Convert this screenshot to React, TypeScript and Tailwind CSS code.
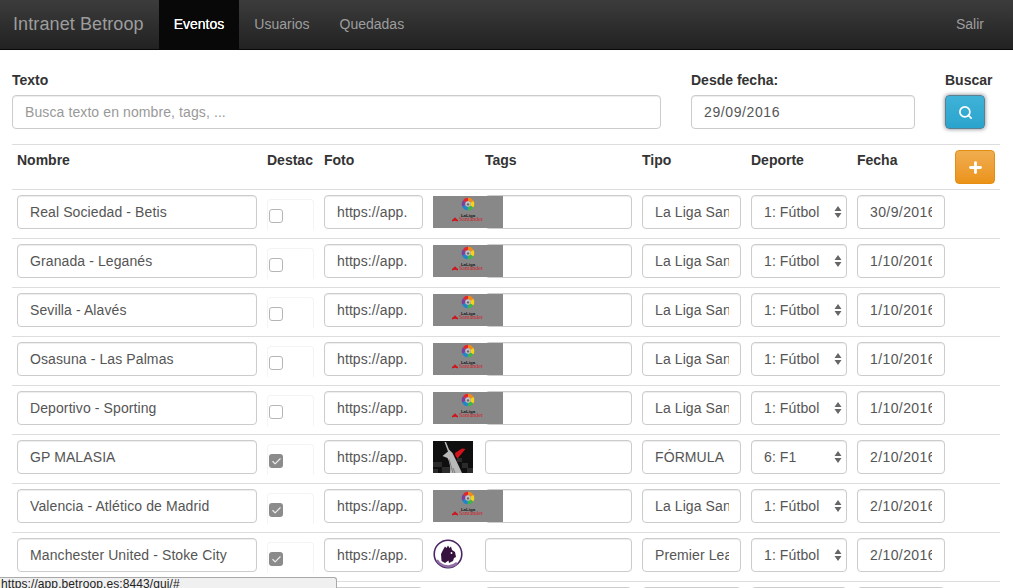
import { Check, Plus, Search } from "lucide-react";

type Logo = "liga" | "f1" | "premier";

type Evento = {
  nombre: string;
  destacado: boolean;
  logo: Logo;
  tipo: string;
  deporte: string;
  fecha: string;
};

const eventos: Evento[] = [
  { nombre: "Real Sociedad - Betis", destacado: false, logo: "liga", tipo: "La Liga Santander", deporte: "1: Fútbol", fecha: "30/9/2016" },
  { nombre: "Granada - Leganés", destacado: false, logo: "liga", tipo: "La Liga Santander", deporte: "1: Fútbol", fecha: "1/10/2016" },
  { nombre: "Sevilla - Alavés", destacado: false, logo: "liga", tipo: "La Liga Santander", deporte: "1: Fútbol", fecha: "1/10/2016" },
  { nombre: "Osasuna - Las Palmas", destacado: false, logo: "liga", tipo: "La Liga Santander", deporte: "1: Fútbol", fecha: "1/10/2016" },
  { nombre: "Deportivo - Sporting", destacado: false, logo: "liga", tipo: "La Liga Santander", deporte: "1: Fútbol", fecha: "1/10/2016" },
  { nombre: "GP MALASIA", destacado: true, logo: "f1", tipo: "FÓRMULA", deporte: "6: F1", fecha: "2/10/2016" },
  { nombre: "Valencia - Atlético de Madrid", destacado: true, logo: "liga", tipo: "La Liga Santander", deporte: "1: Fútbol", fecha: "2/10/2016" },
  { nombre: "Manchester United - Stoke City", destacado: true, logo: "premier", tipo: "Premier League", deporte: "1: Fútbol", fecha: "2/10/2016" },
  { nombre: "", destacado: true, logo: "premier", tipo: "", deporte: "", fecha: "" },
];

const inputClass =
  "h-[34px] rounded-[4px] border border-[#ccc] bg-white px-3 text-sm text-[#555] shadow-[inset_0_1px_1px_rgba(0,0,0,0.075)] outline-none placeholder:text-[#999]";

const wheelColors = ["#f08a1c", "#f6d313", "#3fb44a", "#1f86c9", "#7b3fa0", "#e3262e"];

function LigaLogo() {
  return (
    <svg width="70" height="32" viewBox="0 0 70 32" className="block shrink-0">
      <rect width="70" height="32" fill="#888888" />
      {wheelColors.map((color, i) => (
        <circle
          key={color}
          cx="35"
          cy="8"
          r="4.5"
          fill="none"
          stroke={color}
          strokeWidth="3.6"
          strokeDasharray="4.75 23.52"
          strokeDashoffset={-i * 4.71}
          transform="rotate(-90 35 8)"
        />
      ))}
      <circle cx="35" cy="8" r="2.7" fill="#c4c4c4" />
      <circle cx="35" cy="8.4" r="1.2" fill="#666666" />
      <text x="35" y="20.5" textAnchor="middle" fontSize="4.4" fontWeight="700" fill="#161616" fontFamily="Liberation Sans">
        LaLiga
      </text>
      <path d="M19 25.5 q3-1.6 6 0 v-1.5 l-1.6-1.2 -1.4-1.6 -1.4 1.6 -1.6 1.2z" fill="#d0141c" />
      <text x="26" y="25.3" fontSize="5.6" textLength="24" lengthAdjust="spacingAndGlyphs" fill="#cf1f28" fontFamily="Liberation Serif">
        Santander
      </text>
    </svg>
  );
}

function F1Logo() {
  return (
    <svg width="40" height="32" viewBox="0 0 40 32" className="block shrink-0 blur-[0.4px]">
      <rect width="40" height="32" fill="#0f0f0f" />
      <path d="M0 21h9v5H0z M9 26h8v6H9z M0 28h5v4H0z M29 22h6v5h-6z M34 27h6v5h-6z M24 17h5v4h-5z" fill="#2b2b2b" />
      <path
        d="M11.5 1 L13 1 L16 8.5 L19.5 12 Q23 19 29 32 L17 32 Q18 24 14.5 17 L9.5 15 L15 10.5z"
        fill="#b9b9b9"
      />
      <path d="M20 27 L22 32 M16 18 L20 32" stroke="#6e6e6e" strokeWidth="0.8" fill="none" />
      <path d="M22 12 L29 7.5 L32.5 8 L24.5 17.5 L22.5 15z" fill="#d3121b" />
    </svg>
  );
}

function PremierLogo() {
  return (
    <svg width="32" height="32" viewBox="0 0 32 32" className="block shrink-0 blur-[0.3px]">
      <circle cx="15" cy="15" r="13.8" fill="white" stroke="#4a2463" strokeWidth="1.6" />
      <path d="M4 21 A 13 13 0 0 0 24 24" fill="none" stroke="#8f6fa3" strokeWidth="2.4" />
      <path
        d="M12 7.5 L13.5 9 L15 6.5 L16.5 9 L18 7.5 L19 11 L22 13 L23 18 L21 19 L20 22 L16 24 L15.5 21.5 L12 24 L8.5 22 L8 15 L10 11z"
        fill="#37123f"
      />
      <circle cx="18.5" cy="14" r="0.9" fill="#ffffff" />
    </svg>
  );
}

function LogoImage({ logo }: { logo: Logo }) {
  if (logo === "liga") return <LigaLogo />;
  if (logo === "f1") return <F1Logo />;
  return <PremierLogo />;
}

function FakeCheckbox({ checked }: { checked: boolean }) {
  return (
    <div className="h-[31px] w-[47px] shrink-0 rounded-t-[4px] border-x border-t border-[#f4f4f4] pl-[1px] pt-[9px]">
      {checked ? (
        <div className="flex h-[14px] w-[14px] items-center justify-center rounded-[3px] bg-[#8b8b8b]">
          <Check size={11} strokeWidth={2.5} className="text-[#eee]" />
        </div>
      ) : (
        <div className="h-[14px] w-[14px] rounded-[3px] border border-[#b5b5b5] bg-white" />
      )}
    </div>
  );
}

function Fila({ evento }: { evento: Evento }) {
  return (
    <div className="flex h-[49px] gap-[10px] border-t border-[#ddd] px-[5px] pt-[5px]">
      <input readOnly value={evento.nombre} className={`${inputClass} w-[240px] shrink-0 tracking-[0.1px]`} />
      <div className="pt-[4px]">
        <FakeCheckbox checked={evento.destacado} />
      </div>
      <input readOnly value="https://app." className={`${inputClass} w-[99px] shrink-0 tracking-[0.1px]`} />
      <div className="relative z-10 w-[42px] shrink-0 pt-[1px]">
        <LogoImage logo={evento.logo} />
      </div>
      <input readOnly className={`${inputClass} w-[147px] shrink-0`} />
      <input readOnly value={evento.tipo} className={`${inputClass} w-[99px] shrink-0 !pr-[11px] tracking-[0.1px]`} />
      <div className={`${inputClass} flex w-[96px] shrink-0 items-center justify-between !pr-[4px] tracking-[0.1px]`}>
        <span>{evento.deporte}</span>
        <svg width="8" height="14" viewBox="0 0 8 14" className="text-[#666]">
          <path d="M4 1 L7.5 6 H0.5z M4 13 L0.5 8 H7.5z" fill="currentColor" />
        </svg>
      </div>
      <input readOnly value={evento.fecha} className={`${inputClass} w-[88px] shrink-0 tracking-[0.4px]`} />
    </div>
  );
}

export default function App() {
  return (
    <div className="relative h-[588px] w-[1013px] overflow-hidden bg-white font-['Liberation_Sans',sans-serif] text-sm text-[#333]">
      <nav className="flex h-[50px] items-stretch border-b border-[#080808] bg-gradient-to-b from-[#3c3c3c] to-[#222]">
        <a className="flex items-center pb-[2px] pl-[13px] pr-[15px] text-lg tracking-[0.1px] text-[#9d9d9d]">Intranet Betroop</a>
        <a className="flex items-center bg-[#080808] px-[15px] pb-[2px] text-white [text-shadow:0_0_0.5px_#fff]">Eventos</a>
        <a className="flex items-center px-[15px] pb-[2px] text-[#9d9d9d]">Usuarios</a>
        <a className="flex items-center px-[15px] pb-[2px] text-[#9d9d9d]">Quedadas</a>
        <a className="ml-auto flex items-center px-[29px] pb-[2px] text-[#9d9d9d]">Salir</a>
      </nav>

      <form className="flex items-start pl-[12px] pt-[22px]">
        <div className="w-[649px]">
          <label className="mb-[7px] block h-[16px] font-bold leading-4">Texto</label>
          <input placeholder="Busca texto en nombre, tags, ..." className={`${inputClass} w-full tracking-[0.1px]`} />
        </div>
        <div className="ml-[30px] w-[224px]">
          <label className="mb-[7px] block h-[16px] font-bold leading-4">Desde fecha:</label>
          <input readOnly value="29/09/2016" className={`${inputClass} w-full tracking-[0.6px]`} />
        </div>
        <div className="ml-[30px]">
          <label className="mb-[7px] block h-[16px] font-bold leading-4">Buscar</label>
          <button
            type="button"
            className="flex h-[34px] w-[40px] items-center justify-center rounded-[4px] border border-[#5d7f92] bg-gradient-to-b from-[#3fb2d8] to-[#2aa4cd] text-white shadow-[0_0_4px_rgba(50,60,70,0.65)]"
          >
            <Search size={15} strokeWidth={2.75} />
          </button>
        </div>
      </form>

      <div className="ml-[12px] mt-[15px] w-[988px]">
        <div className="flex h-[45px] gap-[10px] border-t border-[#ddd] px-[5px] pt-[5px] font-bold">
          <div className="w-[240px] shrink-0 leading-5">Nombre</div>
          <div className="w-[47px] shrink-0 leading-5">Destac</div>
          <div className="w-[99px] shrink-0 leading-5">Foto</div>
          <div className="w-[42px] shrink-0" />
          <div className="w-[147px] shrink-0 leading-5">Tags</div>
          <div className="w-[99px] shrink-0 leading-5">Tipo</div>
          <div className="w-[96px] shrink-0 leading-5">Deporte</div>
          <div className="w-[88px] shrink-0 leading-5">Fecha</div>
          <button
            type="button"
            className="flex h-[34px] w-[40px] shrink-0 items-center justify-center rounded-[4px] border border-[#e38d13] bg-gradient-to-b from-[#f0ad4e] to-[#eb9316] text-white"
          >
            <Plus size={17} strokeWidth={4} />
          </button>
        </div>
        {eventos.map((evento, i) => (
          <Fila key={i} evento={evento} />
        ))}
      </div>

      <div className="absolute bottom-0 left-0 z-20 h-[11px] w-[337px] overflow-hidden rounded-tr-[3px] border-r border-t border-[#a9a9a9] bg-[#f0f0f0] pl-[1px] text-xs leading-[13px] tracking-[0.1px] text-[#222]">
        https://app.betroop.es:8443/gui/#
      </div>
    </div>
  );
}
